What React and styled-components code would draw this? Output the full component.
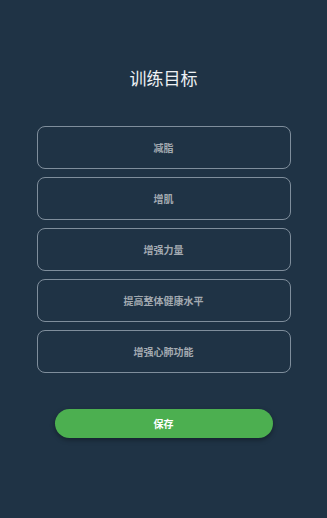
import React, { useState } from "react";
import styled, { createGlobalStyle } from "styled-components";

const GlobalStyle = createGlobalStyle`
  html, body {
    margin: 0;
    padding: 0;
    background: #1f3345;
  }
  body {
    font-family: "Noto Sans CJK SC", "Noto Sans", sans-serif;
  }
`;

const Page = styled.div`
  width: 327px;
  min-height: 518px;
  box-sizing: border-box;
  background: #1f3345;
  display: flex;
  flex-direction: column;
  align-items: center;
  padding-top: 67px;
`;

const Title = styled.h1`
  margin: 0;
  font-size: 17px;
  line-height: 22px;
  font-weight: 400;
  color: #eef1f4;
`;

const OptionList = styled.div`
  margin-top: 37px;
  width: 254px;
  display: flex;
  flex-direction: column;
  gap: 8px;
`;

const Option = styled.button`
  height: 43px;
  box-sizing: border-box;
  border: 1px solid ${(p) => (p.$selected ? "#4caf50" : "#7f8e9c")};
  border-radius: 8px;
  background: transparent;
  color: #a3aab1;
  font-family: inherit;
  font-size: 10px;
  font-weight: 700;
  cursor: pointer;
  padding: 0;
`;

const SaveButton = styled.button`
  margin-top: 36px;
  width: 218px;
  height: 29px;
  border: none;
  border-radius: 15px;
  background: #4caf50;
  color: #ffffff;
  font-family: inherit;
  font-size: 10px;
  font-weight: 700;
  box-shadow: 0 2px 5px rgba(0, 0, 0, 0.35);
  cursor: pointer;
`;

const goals = ["减脂", "增肌", "增强力量", "提高整体健康水平", "增强心肺功能"];

export default function App() {
  const [selected, setSelected] = useState(null);
  return (
    <>
      <GlobalStyle />
      <Page>
        <Title>训练目标</Title>
        <OptionList>
          {goals.map((g) => (
            <Option key={g} $selected={selected === g} onClick={() => setSelected(g)}>
              {g}
            </Option>
          ))}
        </OptionList>
        <SaveButton>保存</SaveButton>
      </Page>
    </>
  );
}
